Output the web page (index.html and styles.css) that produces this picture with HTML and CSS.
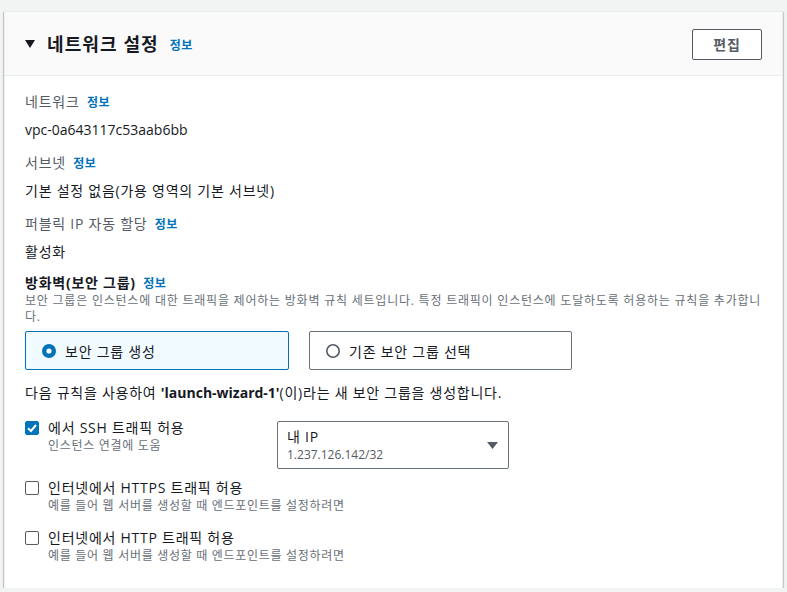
FILE: index.html
```html
<!DOCTYPE html>
<html lang="ko">
<head>
<meta charset="utf-8">
<link rel="stylesheet" href="styles.css">
</head>
<body>
<div class="card">
  <div class="card-header">
    <div class="hdr-left">
      <svg class="tri" width="10" height="8" viewBox="0 0 10 8"><path d="M0 0H10L5 8Z" fill="#16191f"/></svg>
      <h2 class="title">네트워크 설정</h2>
      <a class="info">정보</a>
    </div>
    <button class="btn">편집</button>
  </div>
  <div class="card-body">
    <div class="field">
      <div class="label">네트워크 <a class="info">정보</a></div>
      <div class="value latin">vpc-0a643117c53aab6bb</div>
    </div>
    <div class="field">
      <div class="label">서브넷 <a class="info">정보</a></div>
      <div class="value">기본 설정 없음(가용 영역의 기본 서브넷)</div>
    </div>
    <div class="field">
      <div class="label">퍼블릭 IP 자동 할당 <a class="info">정보</a></div>
      <div class="value">활성화</div>
    </div>
    <div class="fw">
      <div class="fw-label">방화벽(보안 그룹) <a class="info">정보</a></div>
      <div class="fw-desc">보안 그룹은 인스턴스에 대한 트래픽을 제어하는 방화벽 규칙 세트입니다. 특정 트래픽이 인스턴스에 도달하도록 허용하는 규칙을 추가합니다.</div>
      <div class="tiles">
        <div class="tile selected">
          <svg class="radio" width="14" height="14" viewBox="0 0 14 14"><circle cx="7" cy="7" r="7" fill="#0073bb"/><circle cx="7" cy="7" r="2.6" fill="#fff"/></svg>
          <span>보안 그룹 생성</span>
        </div>
        <div class="tile">
          <svg class="radio" width="14" height="14" viewBox="0 0 14 14"><circle cx="7" cy="7" r="6.2" fill="#fff" stroke="#545b64" stroke-width="1.6"/></svg>
          <span>기존 보안 그룹 선택</span>
        </div>
      </div>
      <div class="rule-text">다음 규칙을 사용하여 <b class="latin">'launch-wizard-1'</b>(이)라는 새 보안 그룹을 생성합니다.</div>
      <div class="rule-row ssh">
        <div class="check-item">
          <span class="cb checked"><svg width="14" height="14" viewBox="0 0 14 14"><path d="M3 7.2L6 10L11 4" fill="none" stroke="#fff" stroke-width="2"/></svg></span>
          <div>
            <div class="cb-label">에서 SSH 트래픽 허용</div>
            <div class="cb-desc">인스턴스 연결에 도움</div>
          </div>
        </div>
        <div class="select">
          <div>
            <div class="sel-main">내 IP</div>
            <div class="sel-sub latin">1.237.126.142/32</div>
          </div>
          <svg class="caret" width="11" height="7" viewBox="0 0 11 7"><path d="M0 0H11L5.5 7Z" fill="#545b64"/></svg>
        </div>
      </div>
      <div class="rule-row https">
        <div class="check-item">
          <span class="cb"></span>
          <div>
            <div class="cb-label">인터넷에서 HTTPS 트래픽 허용</div>
            <div class="cb-desc">예를 들어 웹 서버를 생성할 때 엔드포인트를 설정하려면</div>
          </div>
        </div>
      </div>
      <div class="rule-row http">
        <div class="check-item">
          <span class="cb"></span>
          <div>
            <div class="cb-label">인터넷에서 HTTP 트래픽 허용</div>
            <div class="cb-desc">예를 들어 웹 서버를 생성할 때 엔드포인트를 설정하려면</div>
          </div>
        </div>
      </div>
    </div>
  </div>
</div>
</body>
</html>
```
FILE: styles.css
```css
* { box-sizing: border-box; }
html, body { margin: 0; }
body {
  background: #f2f3f3;
  padding: 11px 4px 0 4px;
  font-family: "Open Sans", "Noto Sans CJK KR", sans-serif;
  font-size: 14px;
  letter-spacing: 0.75px;
  color: #16191f;
}
.latin { letter-spacing: 0; }
.card {
  background: #fff;
  border: 1px solid #eaeded;
  border-bottom: none;
  box-shadow: 0 1px 1px 0 rgba(0,28,36,.3), 1px 1px 1px 0 rgba(0,28,36,.15), -1px 1px 1px 0 rgba(0,28,36,.15);
}
.card-header {
  height: 64px;
  background: #fafafa;
  border-bottom: 1px solid #eaeded;
  display: flex;
  align-items: center;
  justify-content: space-between;
  padding: 0 20px;
}
.hdr-left { display: flex; align-items: center; }
.tri { margin-right: 12px; margin-top: 1px; }
.title {
  margin: 0;
  font-size: 18px;
  font-weight: 700;
  line-height: 24px;
  letter-spacing: 1.1px;
}
.info {
  color: #0073bb;
  font-size: 12px;
  font-weight: 700;
  letter-spacing: 0.5px;
  text-decoration: none;
}
.hdr-left .info { margin-left: 11px; margin-top: 2px; }
.btn {
  width: 70px;
  height: 31px;
  background: #fff;
  border: 1px solid #545b64;
  border-radius: 2px;
  font-family: inherit;
  font-size: 14px;
  font-weight: 700;
  letter-spacing: 0.75px;
  color: #545b64;
  padding: 0;
  margin-top: 1px;
}
.card-body { padding: 15px 20px 24px 20px; }
.field { margin-bottom: 11px; }
.label { color: #545b64; line-height: 22px; }
.label .info { margin-left: 3px; }
.value { line-height: 22px; margin-top: 5px; }
.fw { margin-top: 3px; }
.fw-label { font-weight: 700; line-height: 18px; }
.fw-label .info { margin-left: 3px; }
.fw-desc { font-size: 12px; line-height: 16px; color: #687078; letter-spacing: 0.78px; }
.tiles {
  display: grid;
  grid-template-columns: 264px 263px;
  column-gap: 20px;
  margin-top: 6px;
}
.tile {
  height: 39px;
  border: 1px solid #687078;
  border-radius: 2px;
  display: flex;
  align-items: center;
  padding-left: 16px;
}
.tile.selected { border-color: #0073bb; background: #f1faff; }
.radio { margin-right: 9px; flex: none; }
.rule-text { line-height: 22px; margin-top: 12px; }
.rule-text b { font-weight: 700; }
.rule-row { display: flex; align-items: flex-start; }
.ssh { margin-top: 14px; }
.https { margin-top: 9px; }
.http { margin-top: 14px; }
.check-item { display: flex; align-items: flex-start; }
.ssh .check-item { width: 252px; }
.cb {
  width: 14px;
  height: 14px;
  border: 1px solid #545b64;
  border-radius: 2px;
  margin-top: 3px;
  margin-right: 9px;
  flex: none;
  display: block;
  background: #fff;
}
.cb.checked { background: #0073bb; border-color: #0073bb; }
.cb.checked svg { display: block; margin: -1px; }
.cb-label { line-height: 20px; }
.cb-desc { font-size: 12px; line-height: 16px; color: #687078; letter-spacing: 0.7px; }
.select {
  width: 232px;
  height: 48px;
  margin-top: 3px;
  border: 1px solid #687078;
  border-radius: 2px;
  display: flex;
  align-items: center;
  justify-content: space-between;
  padding: 0 10px 0 9px;
}
.sel-main { line-height: 20px; }
.sel-sub { font-size: 12px; line-height: 16px; color: #545b64; }
```
